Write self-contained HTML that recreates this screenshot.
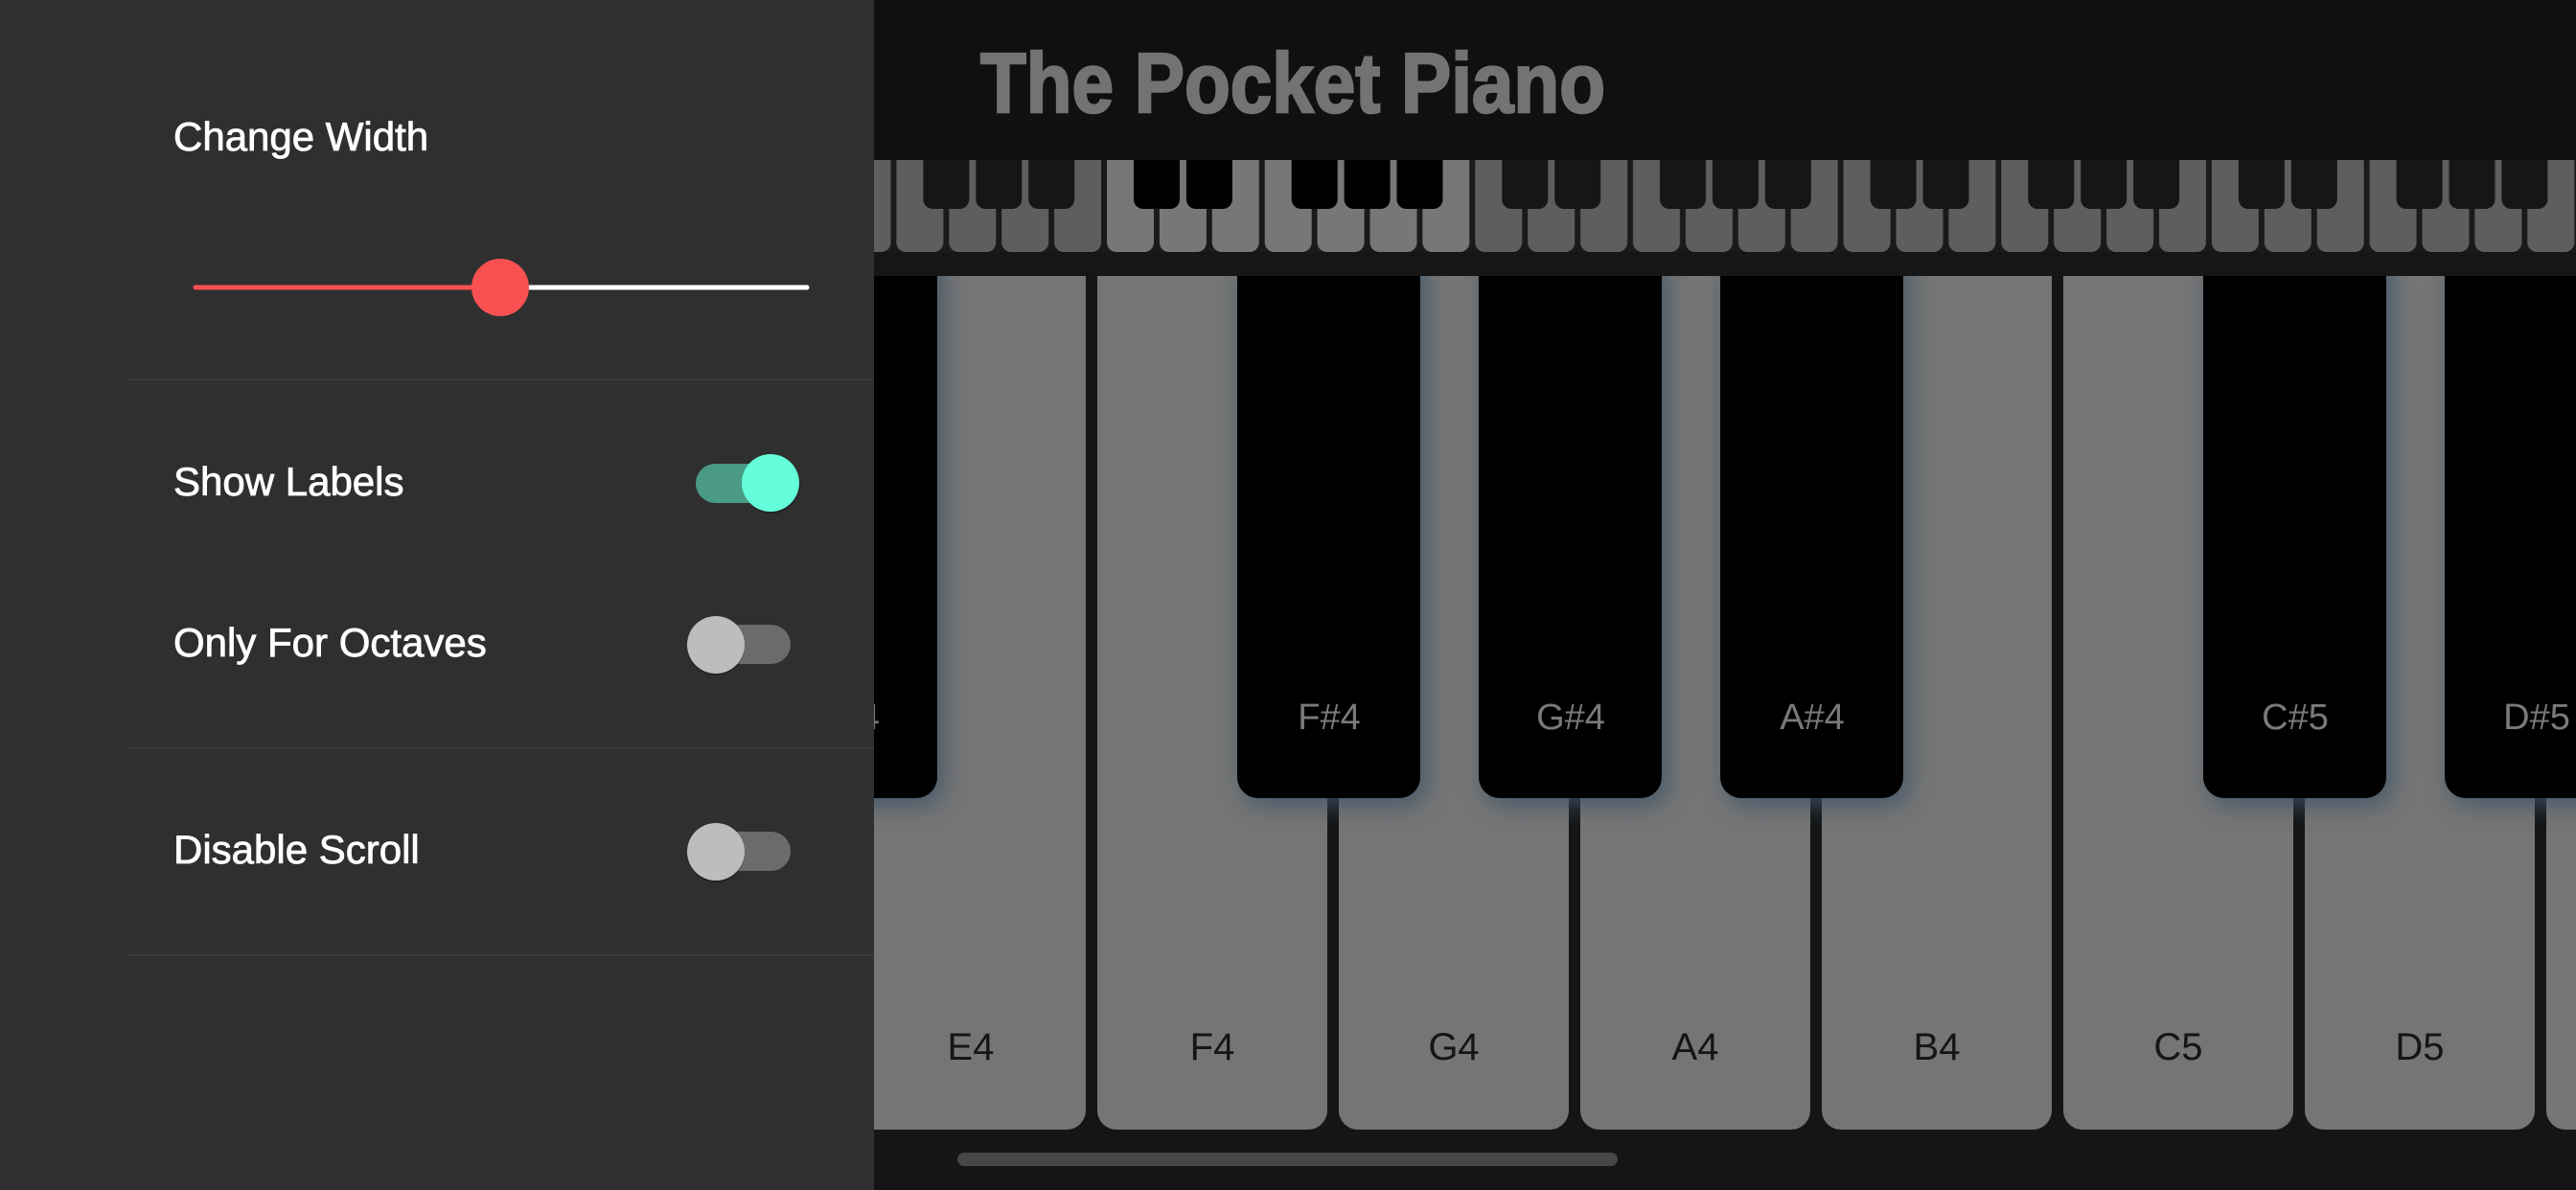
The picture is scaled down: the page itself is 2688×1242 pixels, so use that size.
<!DOCTYPE html>
<html><head><meta charset="utf-8"><style>
html,body{margin:0;padding:0;background:#111;overflow:hidden}
svg{display:block}
text{font-family:"Liberation Sans",sans-serif}
</style></head><body>
<svg width="2688" height="1242" viewBox="0 0 2688 1242" xmlns="http://www.w3.org/2000/svg">
<defs>
<pattern id="dim" patternUnits="userSpaceOnUse" x="1155" y="167" width="384.3" height="96">
  <rect x="0" y="0" width="384.3" height="96" fill="#1a1a1a"/>
  <g fill="#5e5e5e">
    <rect x="0" y="-20" width="49" height="116" rx="10"/>
    <rect x="54.9" y="-20" width="49" height="116" rx="10"/>
    <rect x="109.8" y="-20" width="49" height="116" rx="10"/>
    <rect x="164.7" y="-20" width="49" height="116" rx="10"/>
    <rect x="219.6" y="-20" width="49" height="116" rx="10"/>
    <rect x="274.5" y="-20" width="49" height="116" rx="10"/>
    <rect x="329.4" y="-20" width="49" height="116" rx="10"/>
  </g>
  <g fill="#161616">
    <rect x="28" y="-20" width="48" height="71" rx="10"/>
    <rect x="82.9" y="-20" width="48" height="71" rx="10"/>
    <rect x="192.7" y="-20" width="48" height="71" rx="10"/>
    <rect x="247.6" y="-20" width="48" height="71" rx="10"/>
    <rect x="302.5" y="-20" width="48" height="71" rx="10"/>
  </g>
</pattern>
<pattern id="lit" patternUnits="userSpaceOnUse" x="1155" y="167" width="384.3" height="96">
  <rect x="0" y="0" width="384.3" height="96" fill="#1a1a1a"/>
  <g fill="#777">
    <rect x="0" y="-20" width="49" height="116" rx="10"/>
    <rect x="54.9" y="-20" width="49" height="116" rx="10"/>
    <rect x="109.8" y="-20" width="49" height="116" rx="10"/>
    <rect x="164.7" y="-20" width="49" height="116" rx="10"/>
    <rect x="219.6" y="-20" width="49" height="116" rx="10"/>
    <rect x="274.5" y="-20" width="49" height="116" rx="10"/>
    <rect x="329.4" y="-20" width="49" height="116" rx="10"/>
  </g>
  <g fill="#000">
    <rect x="28" y="-20" width="48" height="71" rx="10"/>
    <rect x="82.9" y="-20" width="48" height="71" rx="10"/>
    <rect x="192.7" y="-20" width="48" height="71" rx="10"/>
    <rect x="247.6" y="-20" width="48" height="71" rx="10"/>
    <rect x="302.5" y="-20" width="48" height="71" rx="10"/>
  </g>
</pattern>
<filter id="sh" x="-30%" y="-10%" width="160%" height="130%">
  <feGaussianBlur in="SourceAlpha" stdDeviation="12" result="b"/>
  <feOffset in="b" dx="6" dy="8" result="o"/>
  <feFlood flood-color="#3c5468" flood-opacity="0.85"/>
  <feComposite operator="in" in2="o"/>
</filter>
<clipPath id="bk"><rect x="0" y="288" width="2688" height="900"/></clipPath>
</defs>

<rect x="0" y="0" width="2688" height="167" fill="#101010"/>
<text x="1023" y="117" font-size="88" font-weight="bold" fill="#737373" stroke="#737373" stroke-width="2.5" textLength="652" lengthAdjust="spacingAndGlyphs">The Pocket Piano</text>

<rect x="0" y="167" width="2688" height="96" fill="url(#dim)"/>
<rect x="1153" y="167" width="380" height="96" fill="url(#lit)"/>
<rect x="0" y="263" width="2688" height="25" fill="#161616"/>

<rect x="0" y="288" width="2688" height="954" fill="#151515"/>
<g fill="#757575" clip-path="url(#bk)">
  <rect x="641" y="260" width="240" height="919" rx="20"/>
  <rect x="893" y="260" width="240" height="919" rx="20"/>
  <rect x="1145" y="260" width="240" height="919" rx="20"/>
  <rect x="1397" y="260" width="240" height="919" rx="20"/>
  <rect x="1649" y="260" width="240" height="919" rx="20"/>
  <rect x="1901" y="260" width="240" height="919" rx="20"/>
  <rect x="2153" y="260" width="240" height="919" rx="20"/>
  <rect x="2405" y="260" width="240" height="919" rx="20"/>
  <rect x="2657" y="260" width="240" height="919" rx="20"/>
</g>
<g font-size="40" fill="#151515" text-anchor="middle">
  <text x="1013" y="1106">E4</text>
  <text x="1265" y="1106">F4</text>
  <text x="1517" y="1106">G4</text>
  <text x="1769" y="1106">A4</text>
  <text x="2021" y="1106">B4</text>
  <text x="2273" y="1106">C5</text>
  <text x="2525" y="1106">D5</text>
</g>
<g clip-path="url(#bk)">
  <g filter="url(#sh)">
    <rect x="787" y="260" width="191" height="573" rx="22"/>
    <rect x="1291" y="260" width="191" height="573" rx="22"/>
    <rect x="1543" y="260" width="191" height="573" rx="22"/>
    <rect x="1795" y="260" width="191" height="573" rx="22"/>
    <rect x="2299" y="260" width="191" height="573" rx="22"/>
    <rect x="2551" y="260" width="191" height="573" rx="22"/>
  </g>
  <g fill="#000">
    <rect x="787" y="260" width="191" height="573" rx="22"/>
    <rect x="1291" y="260" width="191" height="573" rx="22"/>
    <rect x="1543" y="260" width="191" height="573" rx="22"/>
    <rect x="1795" y="260" width="191" height="573" rx="22"/>
    <rect x="2299" y="260" width="191" height="573" rx="22"/>
    <rect x="2551" y="260" width="191" height="573" rx="22"/>
  </g>
</g>
<g font-size="38" fill="#7a7a7a" text-anchor="middle">
  <text x="883" y="761">D#4</text>
  <text x="1387" y="761">F#4</text>
  <text x="1639" y="761">G#4</text>
  <text x="1891" y="761">A#4</text>
  <text x="2395" y="761">C#5</text>
  <text x="2647" y="761">D#5</text>
</g>
<rect x="999" y="1203" width="689" height="14" rx="7" fill="#474747"/>

<rect x="0" y="0" width="912" height="1242" fill="#2f2f2f"/>
<g font-size="42" fill="#fff" stroke="#fff" stroke-width="0.8">
  <text x="181" y="157">Change Width</text>
  <text x="181" y="517">Show Labels</text>
  <text x="181" y="685">Only For Octaves</text>
  <text x="181" y="901">Disable Scroll</text>
</g>
<line x1="204" y1="300" x2="522" y2="300" stroke="#f95151" stroke-width="5" stroke-linecap="round"/>
<line x1="522" y1="300" x2="842" y2="300" stroke="#fff" stroke-width="5" stroke-linecap="round"/>
<circle cx="522" cy="300" r="30" fill="#f95151"/>
<rect x="132" y="395" width="780" height="2" fill="#3a3a3a"/>
<rect x="132" y="780" width="780" height="2" fill="#3a3a3a"/>
<rect x="132" y="996" width="780" height="2" fill="#3a3a3a"/>

<rect x="726" y="484" width="100" height="41" rx="20.5" fill="#4a9a85"/>
<circle cx="805" cy="506" r="30" fill="#000" opacity="0.25"/>
<circle cx="804" cy="504" r="30" fill="#64ffda"/>
<rect x="748" y="652" width="77" height="41" rx="20.5" fill="#6b6b6b"/>
<circle cx="747" cy="675" r="30" fill="#000" opacity="0.25"/>
<circle cx="747" cy="673" r="30" fill="#bdbdbd"/>
<rect x="748" y="868" width="77" height="41" rx="20.5" fill="#6b6b6b"/>
<circle cx="747" cy="891" r="30" fill="#000" opacity="0.25"/>
<circle cx="747" cy="889" r="30" fill="#bdbdbd"/>
</svg>
</body></html>
